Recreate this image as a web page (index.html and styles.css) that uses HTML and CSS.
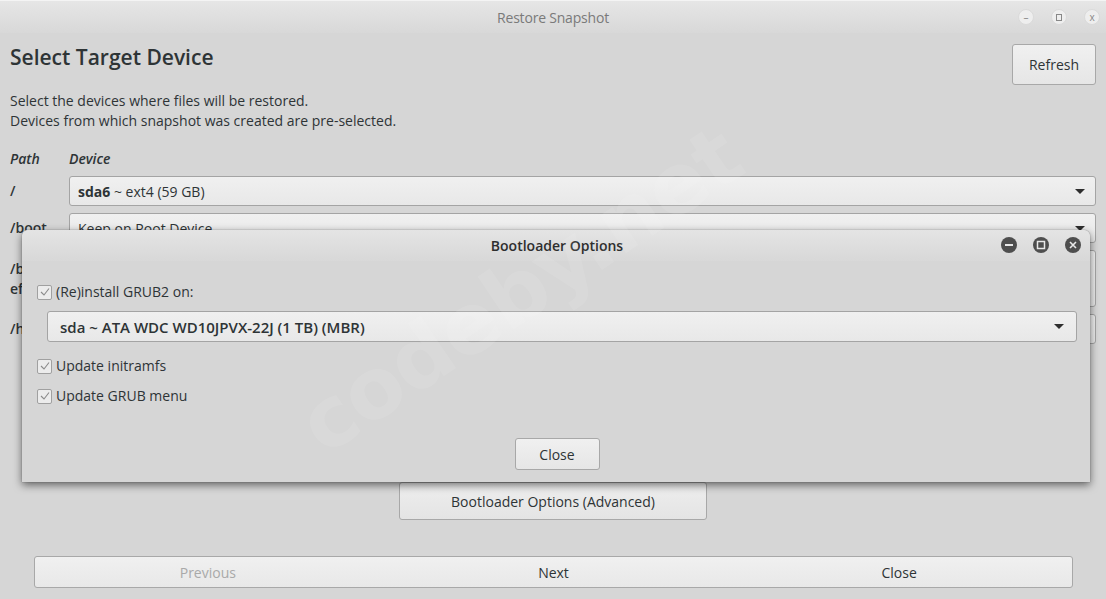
FILE: index.html
```html
<!DOCTYPE html>
<html>
<head>
<meta charset="utf-8">
<link rel="stylesheet" href="styles.css">
</head>
<body>
<div class="window">
  <div class="titlebar">
    <span class="title">Restore Snapshot</span>
    <div class="wm-controls">
      <span class="wm-btn">–</span>
      <span class="wm-btn"><span class="sq"></span></span>
      <span class="wm-btn">x</span>
    </div>
  </div>

  <div class="main">
    <div class="header">
      <h1>Select Target Device</h1>
      <button class="btn refresh">Refresh</button>
    </div>
    <p class="desc">Select the devices where files will be restored.<br>Devices from which snapshot was created are pre-selected.</p>

    <div class="grid">
      <div class="colhead">Path</div>
      <div class="colhead">Device</div>

      <div class="path">/</div>
      <div class="combo"><span><b>sda6</b> ~ ext4 (59 GB)</span><i class="arrow"></i></div>

      <div class="path">/boot</div>
      <div class="combo"><span>Keep on Root Device</span><i class="arrow"></i></div>

      <div class="path two">/boot/<br>efi</div>
      <div class="combo tall"><span>Keep on Root Device</span><i class="arrow"></i></div>

      <div class="path">/home</div>
      <div class="combo"><span>Keep on Root Device</span><i class="arrow"></i></div>
    </div>

    <div class="adv-row">
      <button class="btn adv">Bootloader Options (Advanced)</button>
    </div>

    <div class="navbar">
      <button class="seg disabled">Previous</button>
      <button class="seg">Next</button>
      <button class="seg">Close</button>
    </div>
  </div>

  <div class="dialog">
    <div class="dlg-titlebar">
      <span class="dlg-title">Bootloader Options</span>
      <div class="dlg-controls">
        <span class="dlg-btn"><svg width="16" height="16" viewBox="0 0 16 16"><rect x="4" y="7" width="8" height="2" fill="#e8e8e8"/></svg></span>
        <span class="dlg-btn"><svg width="16" height="16" viewBox="0 0 16 16"><rect x="4.5" y="4.5" width="7" height="7" fill="none" stroke="#e8e8e8" stroke-width="1.5"/></svg></span>
        <span class="dlg-btn"><svg width="16" height="16" viewBox="0 0 16 16"><path d="M5 5 L11 11 M11 5 L5 11" stroke="#e8e8e8" stroke-width="1.6"/></svg></span>
      </div>
    </div>
    <div class="dlg-body">
      <label class="check"><span class="box"><svg width="12" height="12" viewBox="0 0 12 12"><path d="M2 6 L5 9 L10 2.5" fill="none" stroke="#8a8a8a" stroke-width="1.1"/></svg></span>(Re)install GRUB2 on:</label>
      <div class="combo dlg-combo"><span><b>sda ~ ATA WDC WD10JPVX-22J (1 TB) (MBR)</b></span><i class="arrow"></i></div>
      <label class="check"><span class="box"><svg width="12" height="12" viewBox="0 0 12 12"><path d="M2 6 L5 9 L10 2.5" fill="none" stroke="#8a8a8a" stroke-width="1.1"/></svg></span>Update initramfs</label>
      <label class="check"><span class="box"><svg width="12" height="12" viewBox="0 0 12 12"><path d="M2 6 L5 9 L10 2.5" fill="none" stroke="#8a8a8a" stroke-width="1.1"/></svg></span>Update GRUB menu</label>
      <div class="dlg-actions">
        <button class="btn dlg-close">Close</button>
      </div>
    </div>
  </div>

  <div class="watermark">codeby.net</div>
</div>
</body>
</html>
```

FILE: styles.css
```css
* { box-sizing: border-box; }
html, body {
  margin: 0;
  padding: 0;
}
body {
  width: 1106px;
  height: 599px;
  overflow: hidden;
  background: #d6d6d6;
  font-family: "Open Sans", "DejaVu Sans", sans-serif;
  font-size: 14px;
  color: #2e3436;
}
.window {
  position: relative;
  width: 1106px;
  height: 599px;
  display: flex;
  flex-direction: column;
}
.titlebar {
  height: 33px;
  flex: none;
  display: flex;
  align-items: center;
  justify-content: center;
  position: relative;
  background: linear-gradient(#e6e6e6, #d8d8d8);
  border-top: 1px solid #f4f4f4;
}
.title {
  color: #7a7a7a;
  font-size: 14px;
  letter-spacing: -0.2px;
}
.wm-controls {
  position: absolute;
  right: 6px;
  top: 8px;
  display: flex;
  gap: 17px;
}
.wm-btn {
  width: 16px;
  height: 16px;
  border-radius: 50%;
  background: #eeeeee;
  border: 1px solid #dadada;
  color: #888;
  font-size: 10px;
  line-height: 13px;
  text-align: center;
  display: flex;
  align-items: center;
  justify-content: center;
}
.wm-btn .sq {
  width: 6px;
  height: 7px;
  border: 1px solid #888;
}
.main {
  flex: 1;
  display: flex;
  flex-direction: column;
  padding: 11px 10px 12px 10px;
}
.header {
  display: flex;
  justify-content: space-between;
  align-items: flex-start;
}
h1 {
  margin: 0;
  font-size: 21px;
  font-weight: 600;
  line-height: 27px;
  color: #2e3436;
}
.btn {
  font-family: inherit;
  font-size: 14px;
  color: #2e3436;
  background: linear-gradient(#f0f0f0, #e6e6e6);
  border: 1px solid #a8a8a8;
  border-radius: 3px;
  padding: 0;
}
.refresh {
  width: 84px;
  height: 41px;
}
.desc {
  margin: 6px 0 0 0;
  line-height: 20px;
}
.grid {
  margin-top: 18px;
  display: grid;
  grid-template-columns: 59px 1fr;
  column-gap: 0;
  row-gap: 7px;
  align-items: center;
}
.colhead {
  font-weight: 600;
  font-style: italic;
  line-height: 20px;
}
.path {
  font-weight: 600;
  line-height: 20px;
}
.combo {
  height: 30px;
  display: flex;
  align-items: center;
  justify-content: space-between;
  padding: 0 10px 0 8px;
  background: linear-gradient(#f0f0f0, #e8e8e8);
  border: 1px solid #a4a4a4;
  border-radius: 3px;
}
.combo.tall {
  height: 57px;
}
.arrow {
  width: 0;
  height: 0;
  border-left: 5px solid transparent;
  border-right: 5px solid transparent;
  border-top: 5px solid #2e2e2e;
}
.adv-row {
  margin-top: 138px;
  display: flex;
  justify-content: center;
}
.adv {
  width: 308px;
  height: 38px;
  background: linear-gradient(#eeeeee, #e4e4e4);
}
.navbar {
  margin: 36px 23px 0 24px;
  height: 32px;
  display: flex;
  border: 1px solid #a8a8a8;
  border-radius: 3px;
  overflow: hidden;
  background: linear-gradient(#f0f0f0, #e8e8e8);
}
.seg {
  flex: 1;
  font-family: inherit;
  font-size: 14px;
  color: #2e3436;
  background: transparent;
  border: none;
  padding: 0;
}
.seg.disabled {
  color: #a9a9a9;
}
.dialog {
  position: absolute;
  left: 22px;
  top: 230px;
  width: 1068px;
  height: 252px;
  background: #d6d6d6;
  border-radius: 6px 6px 0 0;
  box-shadow: 0 3px 8px rgba(0,0,0,0.55), 0 0 1px rgba(0,0,0,0.6);
  display: flex;
  flex-direction: column;
}
.dlg-titlebar {
  height: 31px;
  flex: none;
  display: flex;
  align-items: center;
  justify-content: center;
  position: relative;
  background: linear-gradient(#e4e4e4, #d8d8d8);
  border-radius: 6px 6px 0 0;
}
.dlg-title {
  font-weight: 600;
  font-size: 14px;
  color: #2e2e2e;
  margin-left: 2px;
}
.dlg-controls {
  position: absolute;
  right: 9px;
  top: 7px;
  display: flex;
  gap: 16px;
}
.dlg-btn {
  width: 16px;
  height: 16px;
  border-radius: 50%;
  background: #4e4e4e;
  display: flex;
}
.dlg-body {
  flex: 1;
  display: flex;
  flex-direction: column;
  padding: 23px 13px 12px 15px;
}
.check {
  display: flex;
  align-items: center;
  gap: 4px;
  line-height: 16px;
  height: 16px;
}
.box {
  width: 15px;
  height: 15px;
  border: 1px solid #a0a0a0;
  border-radius: 2px;
  background: #ececec;
  display: flex;
  align-items: center;
  justify-content: center;
}
.dlg-combo {
  margin: 11px 0 16px 10px;
  height: 31px;
  padding-left: 12px;
  padding-right: 12px;
  font-size: 15px;
}
.dlg-combo b {
  font-weight: 600;
}
.check + .check {
  margin-top: 14px;
}
.dlg-actions {
  margin-top: auto;
  display: flex;
  justify-content: center;
}
.dlg-close {
  width: 85px;
  height: 32px;
}
.watermark {
  position: absolute;
  left: 520px;
  top: 290px;
  transform: translate(-50%, -50%) rotate(-34deg);
  font-family: "DejaVu Sans", sans-serif;
  font-weight: bold;
  font-size: 84px;
  letter-spacing: -1px;
  color: rgba(255,255,255,0.09);
  white-space: nowrap;
  pointer-events: none;
}
```
